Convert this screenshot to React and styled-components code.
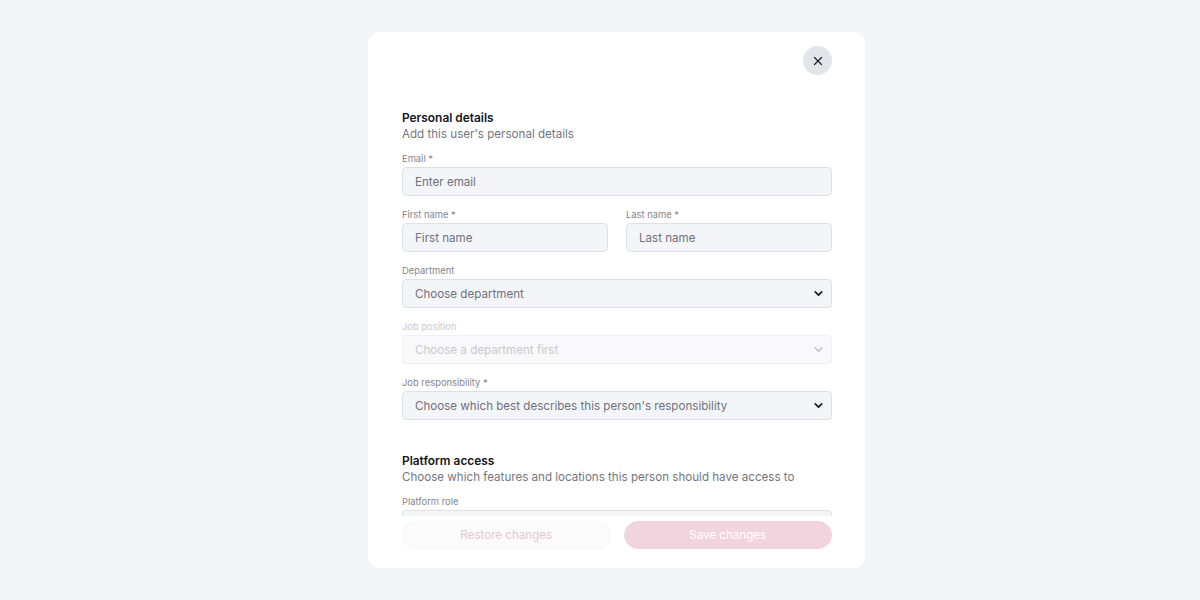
import styled, { createGlobalStyle } from "styled-components";
import { ChevronDown, X } from "lucide-react";

const GlobalStyle = createGlobalStyle`
  html, body {
    margin: 0;
    padding: 0;
    background: #f4f5f9;
    font-family: Inter, "Noto Sans", sans-serif;
  }
`;

const Page = styled.div`
  display: flex;
  justify-content: center;
  padding: 32px 0 0 33px;
  height: 600px;
  box-sizing: border-box;
`;

const Modal = styled.div`
  width: 497px;
  height: 536px;
  background: #ffffff;
  border-radius: 12px;
  display: flex;
  flex-direction: column;
  overflow: hidden;
`;

const Header = styled.div`
  display: flex;
  justify-content: flex-end;
  padding: 14px 33px 0 34px;
`;

const CloseButton = styled.button`
  width: 29px;
  height: 29px;
  border-radius: 50%;
  border: none;
  background: #e4e5ea;
  color: #1d1d22;
  display: flex;
  align-items: center;
  justify-content: center;
  padding: 0;
  cursor: pointer;
`;

const Body = styled.div`
  flex: 1;
  overflow: hidden;
  display: flex;
  flex-direction: column;
  gap: 33px;
  padding: 35px 33px 0 34px;
`;

const Section = styled.div`
  display: flex;
  flex-direction: column;
  gap: 12px;
`;

const SectionHead = styled.div`
  display: flex;
  flex-direction: column;
  margin-bottom: -2px;
`;

const Title = styled.div`
  font-size: 11.9px;
  line-height: 16px;
  font-weight: 600;
  color: #15151a;
`;

const Subtitle = styled.div`
  font-size: 11.6px;
  line-height: 16px;
  color: #75767e;
`;

const Row = styled.div`
  display: grid;
  grid-template-columns: 1fr 1fr;
  gap: 18px;
`;

const Field = styled.div`
  display: flex;
  flex-direction: column;
  gap: 2px;
`;

const Label = styled.label`
  font-size: 9.4px;
  line-height: 13px;
  color: ${(p) => (p.disabled ? "#cfc6cb" : "#85858d")};
`;

const Box = styled.div`
  height: 29px;
  flex-shrink: 0;
  box-sizing: border-box;
  background: ${(p) => (p.disabled ? "#f9f9fb" : "#f4f5f9")};
  border: 1px solid ${(p) => (p.disabled ? "#f0f0f3" : "#dfe0e5")};
  border-radius: 4px;
  padding: 0 6px 0 12px;
  display: flex;
  align-items: center;
  justify-content: space-between;
  font-size: 11.6px;
  color: ${(p) => (p.disabled ? "#c8c9ce" : "#6f717a")};
`;

const Chevron = styled(ChevronDown)`
  color: ${(p) => (p.$disabled ? "#c3c4c9" : "#16161b")};
  flex-shrink: 0;
`;

const Footer = styled.div`
  display: grid;
  grid-template-columns: 1fr 1fr;
  gap: 13px;
  padding: 5px 33px 19px 34px;
  background: #ffffff;
`;

const Button = styled.button`
  height: 28px;
  border-radius: 14px;
  font-family: Inter, "Noto Sans", sans-serif;
  font-size: 11.6px;
  border: 1px solid ${(p) => (p.primary ? "#f2d4de" : "#f5f5f7")};
  background: ${(p) => (p.primary ? "#f2d4de" : "#fbfbfc")};
  color: ${(p) => (p.primary ? "#ffffff" : "#e6c7d2")};
  cursor: default;
`;

const Input = ({ label, placeholder, disabled }) => (
  <Field>
    <Label disabled={disabled}>{label}</Label>
    <Box disabled={disabled}>{placeholder}</Box>
  </Field>
);

const Select = ({ label, placeholder, disabled }) => (
  <Field>
    <Label disabled={disabled}>{label}</Label>
    <Box disabled={disabled}>
      {placeholder}
      <Chevron size={13} strokeWidth={3} $disabled={disabled} />
    </Box>
  </Field>
);

export default function App() {
  return (
    <Page>
      <GlobalStyle />
      <Modal>
        <Header>
          <CloseButton aria-label="Close">
            <X size={14} strokeWidth={2.1} />
          </CloseButton>
        </Header>
        <Body>
          <Section>
            <SectionHead>
              <Title>Personal details</Title>
              <Subtitle>Add this user's personal details</Subtitle>
            </SectionHead>
            <Input label="Email *" placeholder="Enter email" />
            <Row>
              <Input label="First name *" placeholder="First name" />
              <Input label="Last name *" placeholder="Last name" />
            </Row>
            <Select label="Department" placeholder="Choose department" />
            <Select
              label="Job position"
              placeholder="Choose a department first"
              disabled
            />
            <Select
              label="Job responsibility *"
              placeholder="Choose which best describes this person's responsibility"
            />
          </Section>
          <Section>
            <SectionHead>
              <Title>Platform access</Title>
              <Subtitle>
                Choose which features and locations this person should have
                access to
              </Subtitle>
            </SectionHead>
            <Input label="Platform role" placeholder="" />
          </Section>
        </Body>
        <Footer>
          <Button>Restore changes</Button>
          <Button primary>Save changes</Button>
        </Footer>
      </Modal>
    </Page>
  );
}
